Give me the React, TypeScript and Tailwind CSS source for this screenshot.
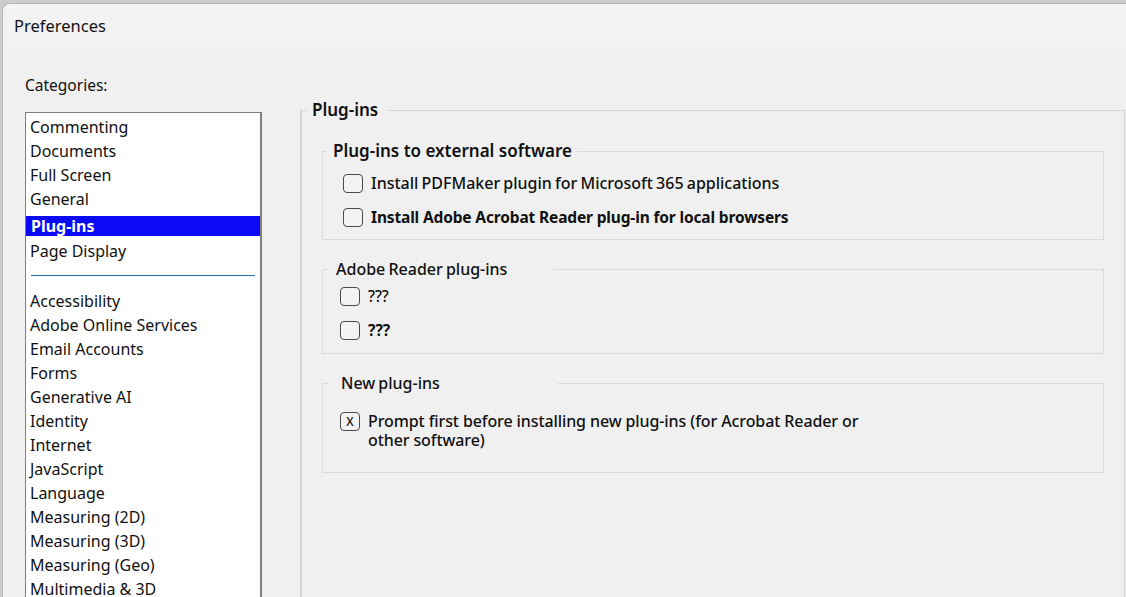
import React from "react";

const font = { fontFamily: '"Noto Sans", "Open Sans", sans-serif' };

const topCategories = ["Commenting", "Documents", "Full Screen", "General"];
const moreCategories = [
  "Accessibility",
  "Adobe Online Services",
  "Email Accounts",
  "Forms",
  "Generative AI",
  "Identity",
  "Internet",
  "JavaScript",
  "Language",
  "Measuring (2D)",
  "Measuring (3D)",
  "Measuring (Geo)",
  "Multimedia & 3D",
];

function Checkbox({ checked }: { checked?: boolean }) {
  return (
    <span className="flex h-[19px] w-[20px] shrink-0 items-center justify-center rounded-[4px] border border-[#4a4a4a] bg-[#f3f3f3] text-[12px] font-medium leading-none text-[#111]">
      {checked ? "X" : null}
    </span>
  );
}

function Option({
  label,
  checked,
  weight,
}: {
  label: string;
  checked?: boolean;
  weight: string;
}) {
  return (
    <label className="flex items-start gap-[8px]">
      <Checkbox checked={checked} />
      <span className={`leading-[19px] text-[#111] ${weight}`}>{label}</span>
    </label>
  );
}

export default function App() {
  return (
    <div
      style={font}
      className="h-[597px] w-[1126px] overflow-hidden bg-[#cdcdcd] pl-[2px] pt-[3px] text-[#111]"
    >
      <div className="flex h-full flex-col rounded-tl-[8px] border-l border-t border-[#b8b8b8] bg-[#f0f0f0]">
        {/* Title bar */}
        <div className="flex h-[44px] shrink-0 items-center rounded-tl-[8px] bg-[#f3f3f3] pl-[11px] text-[16.5px]">
          Preferences
        </div>

        <div className="flex flex-1 pl-[22px]">
          {/* Categories */}
          <div className="flex w-[237px] shrink-0 flex-col">
            <div className="mt-[26px] text-[15.5px] leading-[22px]">Categories:</div>
            <div className="mt-[16px] flex-1 border border-r-2 border-[#7f7f7f] bg-white pt-[2px] text-[16px]">
              {topCategories.map((c) => (
                <div key={c} className="h-[24px] pl-[4px] leading-[24px]">
                  {c}
                </div>
              ))}
              <div className="mt-[5px] h-[20px] bg-[#0a0af5] pl-[5px] font-bold leading-[20px] text-white">
                Plug-ins
              </div>
              <div className="mt-[3px] h-[24px] pl-[4px] leading-[24px]">Page Display</div>
              <div className="mx-[5px] my-[12px] h-px bg-[#2370a8]" />
              <div className="pt-px">
                {moreCategories.map((c) => (
                  <div key={c} className="h-[24px] pl-[4px] leading-[24px]">
                    {c}
                  </div>
                ))}
              </div>
            </div>
          </div>

          {/* Plug-ins panel */}
          <div className="ml-[38px] flex-1 pr-px pt-[51px]">
            <fieldset className="h-[600px] border border-l-2 border-[#d6d6d6]">
              <legend className="ml-[5px] w-[80px] pl-[5px] text-[17px] font-semibold leading-[22px]">
                Plug-ins
              </legend>

              <div className="flex flex-col gap-[18px] px-[20px] pt-[19px]">
                <fieldset className="border border-[#dadada] pb-[12px]">
                  <legend className="ml-[4px] w-[250px] pl-[6px] text-[17px] font-semibold leading-[22px]">
                    Plug-ins to external software
                  </legend>
                  <div className="flex flex-col gap-[15px] pl-[20px] pt-[12px]">
                    <Option
                      label="Install PDFMaker plugin for Microsoft 365 applications"
                      weight="text-[16px] font-medium [word-spacing:-1px]"
                    />
                    <Option
                      label="Install Adobe Acrobat Reader plug-in for local browsers"
                      weight="text-[15.5px] font-bold tracking-[-0.15px]"
                    />
                  </div>
                </fieldset>

                <fieldset className="border border-[#dadada] pb-[13px]">
                  <legend className="ml-[5px] w-[225px] pl-[8px] text-[16px] font-medium leading-[22px] [word-spacing:-1px]">
                    Adobe Reader plug-ins
                  </legend>
                  <div className="flex flex-col gap-[15px] pl-[17px] pt-[7px]">
                    <Option label="???" weight="text-[15.5px] font-medium" />
                    <Option label="???" weight="text-[15.5px] font-bold" />
                  </div>
                </fieldset>

                <fieldset className="border border-[#dadada] pb-[22px]">
                  <legend className="ml-[5px] w-[230px] pl-[13px] text-[16px] font-medium leading-[22px] [word-spacing:-1px]">
                    New plug-ins
                  </legend>
                  <div className="pl-[17px] pt-[18px]">
                    <div className="w-[520px]">
                      <Option
                        label="Prompt first before installing new plug-ins (for Acrobat Reader or other software)"
                        checked
                        weight="text-[16px] font-medium tracking-[-0.1px]"
                      />
                    </div>
                  </div>
                </fieldset>
              </div>
            </fieldset>
          </div>
        </div>
      </div>
    </div>
  );
}
